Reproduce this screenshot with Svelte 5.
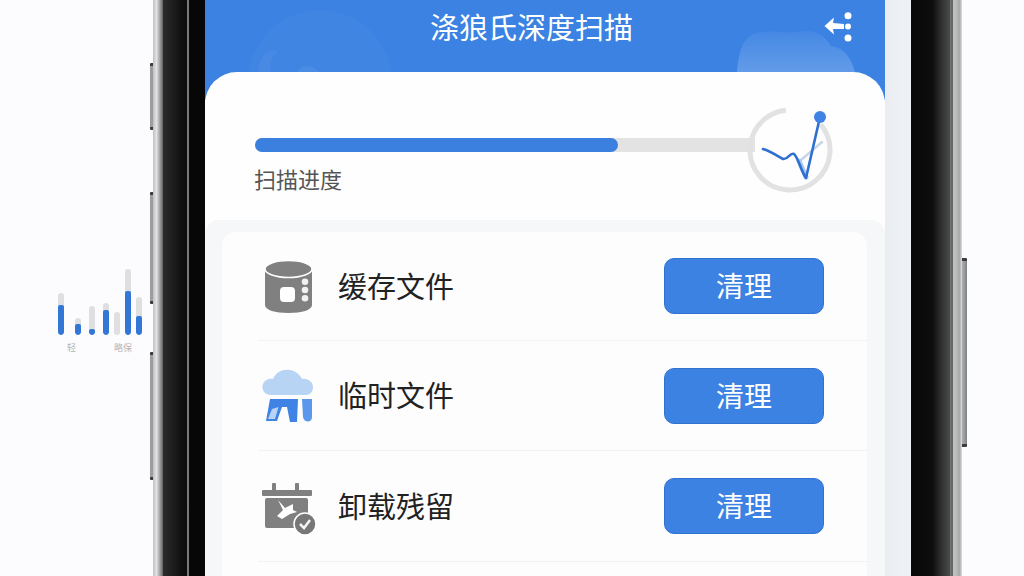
<script>
	const bars = [
		{ track: 42, fill: 30, gap: 11 },
		{ track: 17, fill: 11, gap: 8 },
		{ track: 29, fill: 6, gap: 8 },
		{ track: 32, fill: 25, gap: 5 },
		{ track: 23, fill: 0, gap: 5 },
		{ track: 66, fill: 44, gap: 5 },
		{ track: 38, fill: 19, gap: 0 }
	];
	const items = [
		{ name: '缓存文件', icon: 'disk' },
		{ name: '临时文件', icon: 'cloud' },
		{ name: '卸载残留', icon: 'calendar' }
	];
</script>

<div class="page">
	<aside class="side">
		<div class="chart">
			{#each bars as b}
				<div class="bar" style="height: {b.track}px; margin-right: {b.gap}px">
					<div class="bar-fill" style="height: {b.fill}px"></div>
				</div>
			{/each}
		</div>
		<div class="chart-labels">
			<span>轻</span>
			<span>略保</span>
		</div>
	</aside>

	<div class="phone">
		<div class="key" style="top: 63px; height: 67px"></div>
		<div class="key" style="top: 192px; height: 112px"></div>
		<div class="key" style="top: 352px; height: 128px"></div>
		<div class="key key-right"></div>

		<div class="metal"></div>
		<div class="bezel-left"></div>

		<main class="screen">
			<header class="header">
				<svg class="header-art" viewBox="0 0 680 100" fill="none">
					<defs>
						<linearGradient id="blob" x1="0" y1="0" x2="0" y2="1">
							<stop offset="0" stop-color="#fff" stop-opacity="0.05" />
							<stop offset="1" stop-color="#fff" stop-opacity="0.2" />
						</linearGradient>
					</defs>
					<circle cx="115" cy="82" r="72" fill="#fff" opacity="0.03" />
					<path d="M53 72 C54 56 62 48 74 51 C66 56 64 64 66 72 Z" fill="#fff" opacity="0.04" />
					<path d="M92 72 C96 64 108 64 114 72 Z" fill="#fff" opacity="0.05" />
					<path d="M532 72 C534 50 538 34 556 32 C570 30 584 34 600 31 C612 30 622 38 626 46 C640 48 646 58 650 72 Z" fill="url(#blob)" />
				</svg>
				<h1 class="title">涤狼氏深度扫描</h1>
				<svg class="share" viewBox="0 0 30 32" fill="none">
					<path d="M0.500 14 L10 5.500 L9 11 L20 12 L20 17 L9 17 L10 22.500 Z" fill="#fff" />
					<circle cx="24" cy="3.800" r="3.500" fill="#fff" />
					<circle cx="24" cy="14.500" r="3" fill="#fff" />
					<circle cx="24" cy="26" r="3.500" fill="#fff" />
				</svg>
			</header>

			<section class="card">
				<div class="progress">
					<div class="track"><div class="track-fill" style="width: 363px"></div></div>
					<div class="progress-label">扫描进度</div>
					<svg class="ring" viewBox="0 0 90 90" fill="none">
						<circle cx="44" cy="45" r="40" stroke="#e2e2e2" stroke-width="5" stroke-dasharray="212 40" transform="rotate(-40 44 45)" />
						<path d="M55 55 L76 37" stroke="#c9d6e6" stroke-width="2.500" stroke-linecap="round" />
						<path d="M53 56 L60 72" stroke="#a9c8f2" stroke-width="5" stroke-linecap="round" />
						<path d="M17 44 C24 46 30 50 37 54 C42 55 44 47 48 49 C52 52 55 66 60 73 L74 12" stroke="#2f6fcf" stroke-width="2.600" stroke-linecap="round" stroke-linejoin="round" />
						<circle cx="74" cy="12" r="6" fill="#3f83e4" />
					</svg>
				</div>

				<div class="panel">
					<ul class="list">
						{#each items as item}
							<li class="row">
								<span class="icon">
									{#if item.icon === 'disk'}
										<svg viewBox="0 0 54 54" fill="none">
											<path d="M4 12 V46 C4 51 14 54 27.500 54 C41 54 51 51 51 46 V12 Z" fill="#808080" />
											<ellipse cx="27.500" cy="10" rx="23.500" ry="8.500" fill="#808080" stroke="#fff" stroke-width="1.500" />
											<rect x="19" y="28" width="15" height="15" rx="4" fill="#fff" />
											<circle cx="44" cy="22.700" r="3.300" fill="#f1f1f1" />
											<circle cx="44" cy="31" r="3.300" fill="#f1f1f1" />
											<circle cx="44" cy="39.300" r="3.300" fill="#f1f1f1" />
										</svg>
									{:else if item.icon === 'cloud'}
										<svg viewBox="0 0 54 54" fill="none">
											<path d="M10 26 C3 26 1 20 1.500 17 C2.500 11 8 9 12 10 C15 3 22 0 29 1 C35 2 39 6 41 10 C47 9 52 13 52 18 C52 23 49 26 45 26 Z" fill="#b7d4f5" />
											<path d="M9 30 H37 L36 53 H29 L26 38 H21 L16 52 H5 Z" fill="#3f83e4" />
											<path d="M7 50 L11 40 L17.500 38 L14 50 Z" fill="#b7d4f5" />
											<path d="M41 30 H51 V48 C51 54 43 54 42 48 Z" fill="#5b97ea" />
										</svg>
									{:else}
										<svg class="spill" viewBox="0 0 54 54" fill="none">
											<rect x="11" y="4" width="4" height="10" rx="1" fill="#808080" />
											<rect x="34" y="4" width="4" height="10" rx="1" fill="#808080" />
											<rect x="1" y="11" width="50" height="6" rx="1" fill="#808080" />
											<rect x="4" y="19" width="43" height="30" rx="2" fill="#808080" />
											<path d="M17 21 L24 29 L32 25 L32 31 L36 33 L29 35 L21 40 L16 37 L22 31 Z" fill="#fff" />
											<circle cx="44" cy="45" r="11" fill="#777" stroke="#fff" stroke-width="1.500" />
											<path d="M39 45 L43 49 L49 41" stroke="#f4f4f4" stroke-width="2.500" />
										</svg>
									{/if}
								</span>
								<span class="name">{item.name}</span>
								<button class="clean">清理</button>
							</li>
						{/each}
					</ul>
				</div>
			</section>
		</main>

		<div class="gutter"></div>
		<div class="bezel-right"></div>
		<div class="metal metal-right"></div>
	</div>
</div>

<style>
	:global(body) {
		margin: 0;
		background: #fdfdfe;
	}

	.page {
		display: flex;
		width: 1024px;
		height: 576px;
		overflow: hidden;
		background: #fcfcfe;
		font-family: "Noto Sans CJK SC", "Noto Sans", sans-serif;
	}

	.side {
		width: 153px;
		flex-shrink: 0;
		padding-top: 269px;
		box-sizing: border-box;
	}

	.chart {
		display: flex;
		align-items: flex-end;
		height: 66px;
		padding-left: 58px;
	}

	.bar {
		width: 6px;
		flex-shrink: 0;
		display: flex;
		align-items: flex-end;
		background: #dddfe1;
		border-radius: 3px;
		overflow: hidden;
	}

	.bar-fill {
		width: 100%;
		background: #3276d6;
		border-radius: 2px 2px 3px 3px;
	}

	.chart-labels {
		display: flex;
		gap: 38px;
		margin-top: 7px;
		padding-left: 67px;
		font-size: 9px;
		line-height: 12px;
		color: #b4b6b9;
	}

	.phone {
		position: relative;
		display: flex;
		width: 809px;
		height: 576px;
		flex-shrink: 0;
	}

	.key {
		position: absolute;
		left: -3px;
		width: 3px;
		box-sizing: border-box;
		background: #9a9c9d;
		border-top: 3px solid #3c3c3c;
		border-bottom: 3px solid #3c3c3c;
		border-radius: 1px 0 0 1px;
	}

	.key-right {
		left: auto;
		right: -5px;
		top: 258px;
		width: 5px;
		height: 189px;
		background: linear-gradient(90deg, #b0b2b3, #7e8081);
		border-radius: 0 1px 1px 0;
	}

	.metal {
		width: 10px;
		flex-shrink: 0;
		background: linear-gradient(90deg, #bfc0c0 0%, #e2e2e2 35%, #8a8b8b 80%, #5c5c5c 100%);
	}

	.metal-right {
		width: 12px;
		background: linear-gradient(90deg, #77797a 0%, #5d5e5f 20%, #c4c5c5 30%, #a9aaab 80%, #dcdddd 100%);
	}

	.bezel-left {
		width: 42px;
		flex-shrink: 0;
		background: linear-gradient(90deg, #2c2c2c 0, #111 18px, #0c0c0c 24px, #77797a 24px, #77797a 26px, #070707 26px);
	}

	.bezel-right {
		width: 39px;
		flex-shrink: 0;
		background: linear-gradient(90deg, #080808 0%, #0d0d0d 55%, #333 80%, #4b4b4b 100%);
	}

	.gutter {
		width: 26px;
		flex-shrink: 0;
		background: linear-gradient(90deg, #eaeef2, #eff2f5);
	}

	.screen {
		width: 680px;
		flex-shrink: 0;
		display: flex;
		flex-direction: column;
		background: #f6f7f8;
	}

	.header {
		position: relative;
		display: flex;
		align-items: flex-start;
		height: 100px;
		flex-shrink: 0;
		padding-left: 225px;
		box-sizing: border-box;
		background: #3b82e3;
		overflow: hidden;
	}

	.header-art {
		position: absolute;
		left: 0;
		top: 0;
		width: 680px;
		height: 100px;
	}

	.title {
		position: relative;
		margin: 0;
		font-size: 29px;
		font-weight: 400;
		line-height: 53px;
		color: #fff;
		white-space: nowrap;
	}

	.share {
		position: absolute;
		left: 619px;
		top: 12px;
		width: 30px;
		height: 32px;
	}

	.card {
		position: relative;
		display: flex;
		flex-direction: column;
		margin-top: -28px;
		background: #fefefe;
		border-radius: 32px 32px 0 0;
		flex: 1;
	}

	.progress {
		position: relative;
		padding: 66px 130px 0 50px;
	}

	.track {
		height: 14px;
		width: 500px;
		background: #e3e3e3;
		border-radius: 7px 0 0 7px;
	}

	.track-fill {
		height: 100%;
		background: #3b7fdf;
		border-radius: 7px;
	}

	.progress-label {
		margin-top: 12px;
		margin-left: -1px;
		font-size: 22px;
		line-height: 28px;
		color: #555;
	}

	.ring {
		position: absolute;
		left: 541px;
		top: 33px;
		width: 90px;
		height: 90px;
	}

	.panel {
		display: flex;
		flex: 1;
		margin-top: 28px;
		padding: 12px 18px 0 17px;
		background: #f6f7f8;
		border-radius: 14px 14px 0 0;
	}

	.list {
		flex: 1;
		list-style: none;
		margin: 0;
		padding: 0;
		background: #fdfdfe;
		border-radius: 14px 14px 0 0;
	}

	.row {
		display: flex;
		align-items: center;
		box-sizing: border-box;
		height: 110px;
		margin-left: 36px;
		padding-right: 43px;
		border-bottom: 1px solid #f1f2f3;
	}

	.row:first-child {
		height: 109px;
	}

	.row:last-child {
		height: 111px;
	}

	.icon {
		width: 54px;
		height: 54px;
		margin-left: 3px;
		flex-shrink: 0;
	}

	.icon svg {
		display: block;
		width: 54px;
		height: 54px;
	}

	.icon svg.spill {
		overflow: visible;
	}

	.name {
		margin-left: 23px;
		margin-bottom: 3px;
		font-size: 29px;
		line-height: 40px;
		color: #222;
		white-space: nowrap;
	}

	.clean {
		margin-left: auto;
		width: 160px;
		height: 56px;
		padding: 0 0 2px;
		border: 1px solid #3272cf;
		border-radius: 10px;
		background: #3b82e3;
		color: #fff;
		font-family: inherit;
		font-size: 28px;
		line-height: 1;
	}
</style>
